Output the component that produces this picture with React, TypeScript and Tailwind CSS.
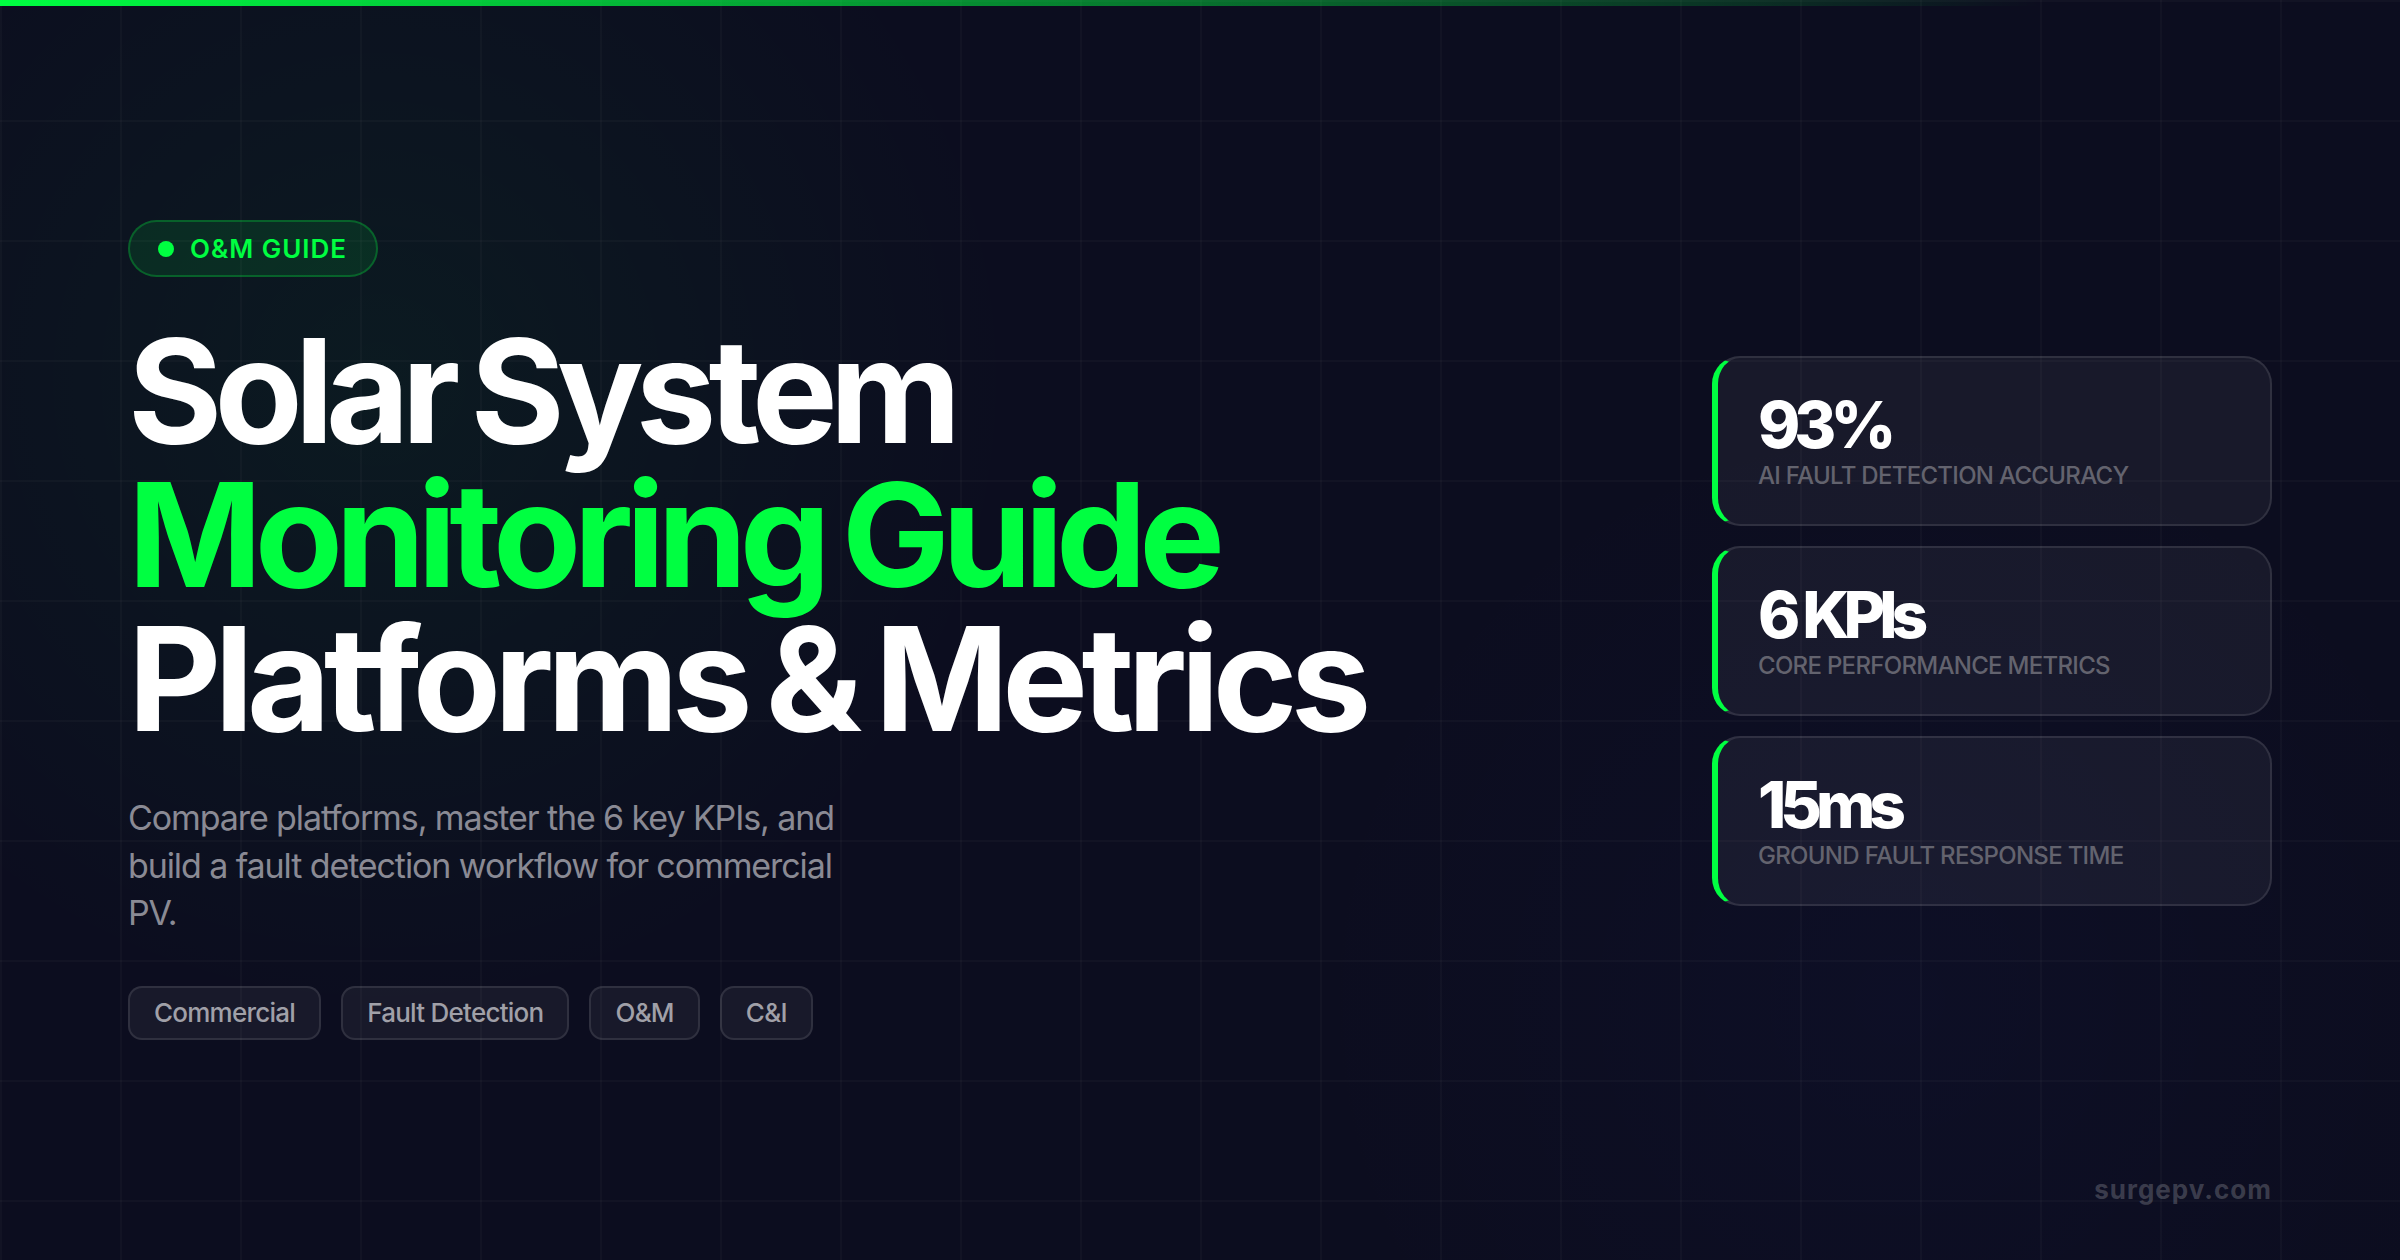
const tags = ["Commercial", "Fault Detection", "O&M", "C&I"]

const stats = [
  { value: "93%", label: "AI Fault Detection Accuracy" },
  { value: "6 KPIs", label: "Core Performance Metrics" },
  { value: "15ms", label: "Ground Fault Response Time" },
]

const App = () => {
  return (
    <div className="relative w-[2400px] h-[1260px] overflow-hidden bg-[#0c0d1f] font-[Inter,sans-serif]">
      {/* glows */}
      <div className="absolute inset-0 bg-[radial-gradient(circle_at_380px_380px,rgba(0,255,65,0.055)_0%,transparent_640px),radial-gradient(circle_at_1900px_1000px,rgba(60,80,255,0.03)_0%,transparent_600px)]" />
      {/* grid */}
      <div className="absolute inset-0 bg-[linear-gradient(rgba(255,255,255,0.022)_2px,transparent_2px),linear-gradient(90deg,rgba(255,255,255,0.022)_2px,transparent_2px)] bg-[size:120px_120px]" />
      <div className="absolute top-0 left-0 right-0 h-[6px] bg-[linear-gradient(90deg,#00ff41,transparent_85%)]" />

      <div className="relative flex h-full items-center justify-between px-[128px]">
        <div className="flex flex-col items-start">
          <div className="flex h-[57px] items-center gap-[16px] rounded-full border-2 border-[#00ff41]/25 bg-[#00ff41]/10 pl-[28px] pr-[29px]">
            <span className="size-[16px] rounded-full bg-[#00ff41]" />
            <span className="text-[26px] font-semibold tracking-[1px] text-[#00ff41]">O&amp;M GUIDE</span>
          </div>

          <h1 className="mt-[42px] text-[144px] font-bold leading-[144px] text-white [word-spacing:-8px]">
            <span className="tracking-[-7.9px]">Solar System</span>
            <br />
            <span className="tracking-[-7.5px] text-[#00ff41]">Monitoring Guide</span>
            <br />
            <span className="tracking-[-6.7px]">Platforms &amp; Metrics</span>
          </h1>

          <p className="mt-[43px] w-[720px] text-[34px] leading-[47.6px] tracking-[-1.1px] text-[#8a8a94]">
            Compare platforms, master the 6 key KPIs, and build a fault detection workflow for commercial PV.
          </p>

          <div className="mt-[49px] flex gap-[20px]">
            {tags.map((tag) => (
              <span
                key={tag}
                className="flex h-[54px] items-center rounded-[14px] border-2 border-white/10 bg-white/5 px-[24px] text-[26px] font-medium tracking-[-0.75px] text-[#a0a0a8]"
              >
                {tag}
              </span>
            ))}
          </div>
        </div>

        <div className="mt-[2px] flex w-[560px] flex-col gap-[20px]">
          {stats.map((stat) => (
            <div
              key={stat.value}
              className="flex h-[170px] flex-col justify-center rounded-[28px] border-2 border-l-[6px] border-white/10 border-l-[#00ff41] bg-white/5 pl-[40px]"
            >
              <div className="text-[64px] font-extrabold leading-[70px] tracking-[-6px] text-white">{stat.value}</div>
              <div className="text-[24px] font-medium uppercase leading-[32px] tracking-[-0.7px] text-[#63636e]">
                {stat.label}
              </div>
            </div>
          ))}
        </div>
      </div>

      <div className="absolute right-[128px] top-[1170px] text-[26px] font-bold tracking-[1px] text-white/20">
        surgepv.com
      </div>
    </div>
  )
}

export default App
